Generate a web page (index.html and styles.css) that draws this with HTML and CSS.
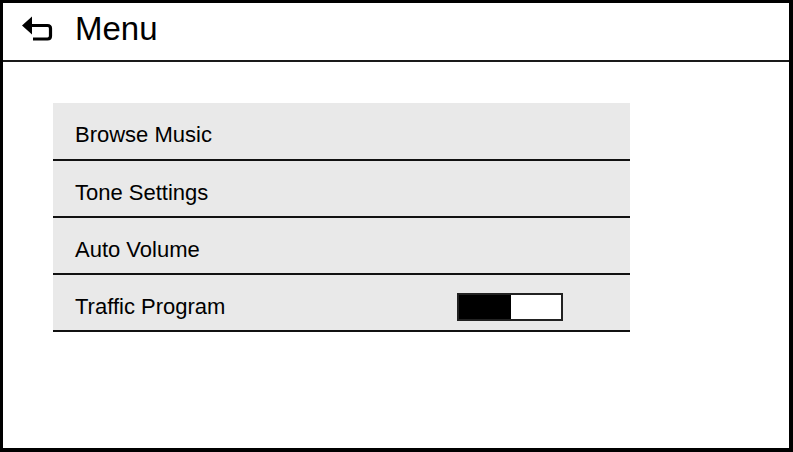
FILE: index.html
```html
<!DOCTYPE html>
<html>
<head>
<meta charset="utf-8">
<link rel="stylesheet" href="styles.css">
</head>
<body>
<div class="screen">
  <header class="header">
    <svg class="back" width="32" height="27" viewBox="0 0 32 27">
      <path d="M0 9.5 L10 0.5 L10 18.5 Z" fill="#000"/>
      <path d="M9 9.5 H25.5 Q28.5 9.5 28.5 12.5 V20 Q28.5 23 25.5 23 H11" fill="none" stroke="#000" stroke-width="3.2"/>
    </svg>
    <span class="title">Menu</span>
  </header>
  <main class="content">
    <ul class="menu">
      <li class="row"><span class="label">Browse Music</span></li>
      <li class="row"><span class="label">Tone Settings</span></li>
      <li class="row"><span class="label">Auto Volume</span></li>
      <li class="row"><span class="label">Traffic Program</span><span class="toggle"><span class="toggle-on"></span></span></li>
    </ul>
  </main>
</div>
</body>
</html>
```

FILE: styles.css
```css
html, body {
  margin: 0;
  padding: 0;
  background: #fff;
}
.screen {
  width: 793px;
  height: 452px;
  box-sizing: border-box;
  border-style: solid;
  border-color: #000;
  border-width: 3px 4px 4px 3px;
  font-family: "Liberation Sans", Arial, sans-serif;
  color: #000;
  display: flex;
  flex-direction: column;
}
.header {
  height: 59px;
  box-sizing: border-box;
  border-bottom: 2px solid #1a1a1a;
  display: flex;
  align-items: center;
  padding: 0 0 5px 19px;
}
.back {
  display: block;
  margin-right: 21px;
}
.title {
  font-size: 33px;
}
.content {
  padding: 41px 0 0 50px;
}
.menu {
  list-style: none;
  margin: 0;
  padding: 0;
  width: 577px;
}
.row {
  height: 57px;
  box-sizing: border-box;
  background: #e9e9e9;
  border-bottom: 2px solid #111;
  padding: 8px 0 0 22px;
  display: flex;
  align-items: center;
  font-size: 22px;
}
.row:first-child {
  height: 58px;
}
.label {
  width: 382px;
}
.toggle {
  width: 106px;
  height: 28px;
  box-sizing: border-box;
  border: 2px solid #222;
  background: #fff;
  display: flex;
}
.toggle-on {
  width: 52px;
  background: #000;
}
```
